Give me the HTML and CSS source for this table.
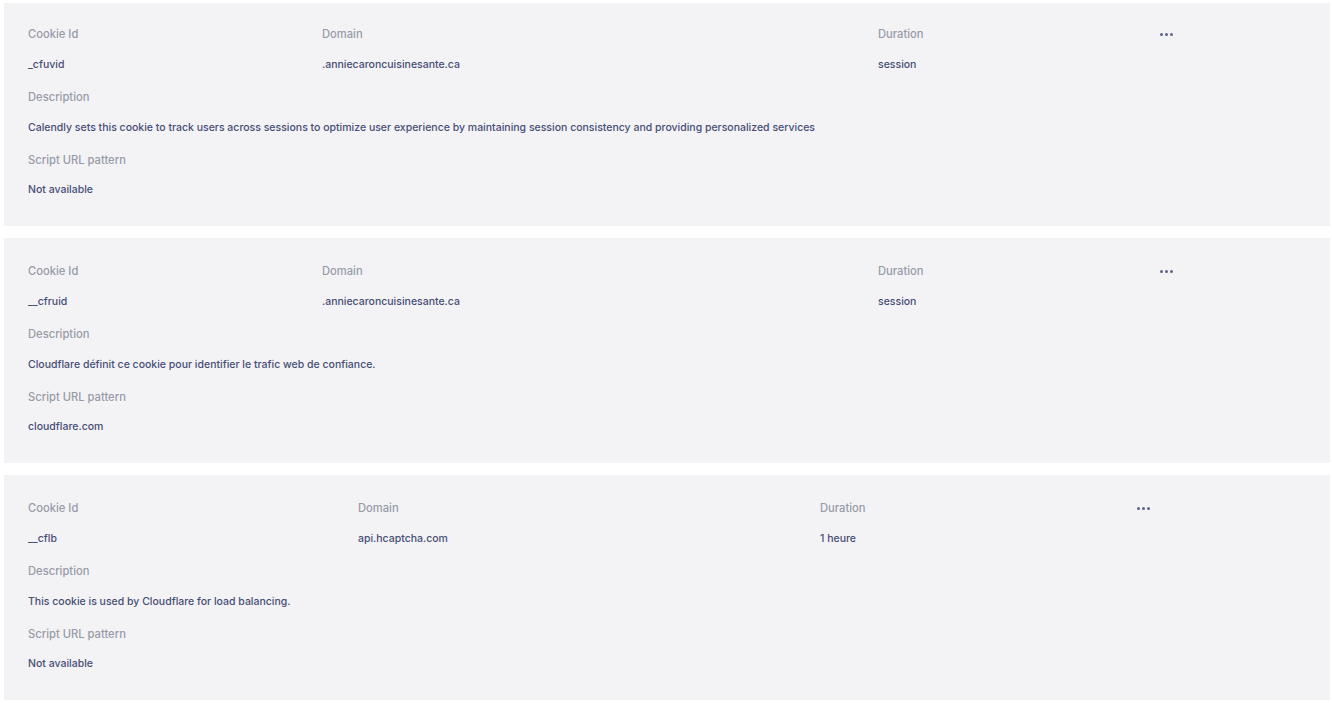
FILE: index.html
```html
<!DOCTYPE html>
<html lang="en">
<head>
  <meta charset="UTF-8" />
  <meta name="viewport" content="width=device-width, initial-scale=1.0"/>
  <title>Cookie list</title>
  <link rel="stylesheet" href="styles.css">
</head>
<body>
  <div class="cookie-list">

    <div class="cookie-card">
      <div class="cookie-head cols-wide">
        <div class="label">Cookie Id</div>
        <div class="label">Domain</div>
        <div class="label">Duration</div>
        <div class="more"><span></span><span></span><span></span></div>
        <div class="value">_cfuvid</div>
        <div class="value">.anniecaroncuisinesante.ca</div>
        <div class="value">session</div>
        <div></div>
      </div>
      <div class="label">Description</div>
      <div class="value">Calendly sets this cookie to track users across sessions to optimize user experience by maintaining session consistency and providing personalized services</div>
      <div class="label">Script URL pattern</div>
      <div class="value">Not available</div>
    </div>

    <div class="cookie-card">
      <div class="cookie-head cols-wide">
        <div class="label">Cookie Id</div>
        <div class="label">Domain</div>
        <div class="label">Duration</div>
        <div class="more"><span></span><span></span><span></span></div>
        <div class="value">__cfruid</div>
        <div class="value">.anniecaroncuisinesante.ca</div>
        <div class="value">session</div>
        <div></div>
      </div>
      <div class="label">Description</div>
      <div class="value">Cloudflare définit ce cookie pour identifier le trafic web de confiance.</div>
      <div class="label">Script URL pattern</div>
      <div class="value">cloudflare.com</div>
    </div>

    <div class="cookie-card">
      <div class="cookie-head cols-short">
        <div class="label">Cookie Id</div>
        <div class="label">Domain</div>
        <div class="label">Duration</div>
        <div class="more"><span></span><span></span><span></span></div>
        <div class="value">__cflb</div>
        <div class="value">api.hcaptcha.com</div>
        <div class="value">1 heure</div>
        <div></div>
      </div>
      <div class="label">Description</div>
      <div class="value">This cookie is used by Cloudflare for load balancing.</div>
      <div class="label">Script URL pattern</div>
      <div class="value">Not available</div>
    </div>

  </div>
</body>
</html>
```

FILE: styles.css
```css
body {
  margin: 0;
  padding: 3px 2px 0 4px;
  background: #ffffff;
  font-family: "Inter", "Noto Sans", sans-serif;
}

.cookie-list {
  display: flex;
  flex-direction: column;
  gap: 12px;
}

.cookie-card {
  background: #f3f3f6;
  padding: 25px 24px 28px 24px;
  display: flex;
  flex-direction: column;
}

/* the first card is cut a little at the top of the view */
.cookie-card:first-child {
  padding-top: 23px;
}

.cookie-head {
  display: grid;
  row-gap: 15px;
  margin-bottom: 16px;
}

.cols-wide {
  grid-template-columns: 294px 556px 282px 1fr;
}

.cols-short {
  grid-template-columns: 330px 462px 317px 1fr;
}

.label {
  font-size: 11.2px;
  line-height: 16px;
  font-weight: 500;
  color: #979ba6;
}

.value {
  font-size: 10.5px;
  line-height: 16px;
  font-weight: 500;
  color: #474e74;
}

.cookie-card > .label {
  margin-bottom: 14.5px;
}

.cookie-card > .value {
  margin-bottom: 16px;
}

.cookie-card > .value:last-child {
  margin-bottom: 0;
}

.cookie-head .label,
.cookie-head .value {
  margin: 0;
}

.more {
  display: flex;
  align-items: center;
  gap: 2px;
  height: 16px;
}

.more span {
  width: 3px;
  height: 3px;
  border-radius: 50%;
  background: #5d6486;
}
```
